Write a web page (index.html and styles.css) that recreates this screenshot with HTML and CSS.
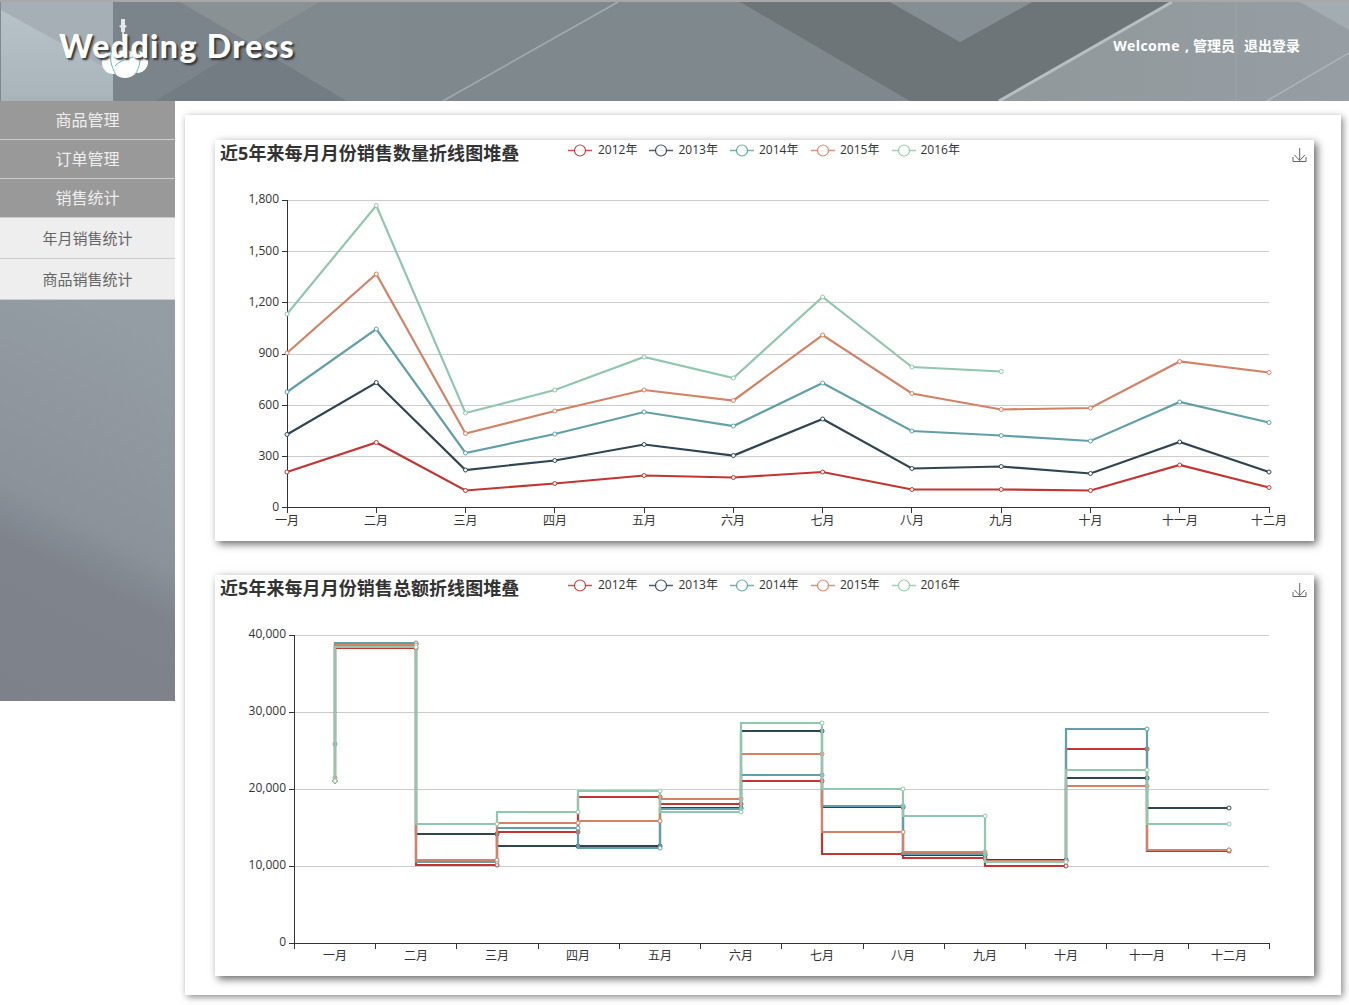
FILE: index.html
```html
<!DOCTYPE html>
<html lang="zh-CN">
<head>
<meta charset="utf-8">
<title>Wedding Dress</title>
<link rel="stylesheet" href="styles.css">
</head>
<body>
<header class="header">
  <svg class="header-bg" viewBox="0 0 1349 101" preserveAspectRatio="none" aria-hidden="true">
    <defs>
      <linearGradient id="panel" x1="0" y1="0" x2="0" y2="1"><stop offset="0" stop-color="#b9c4ca"/><stop offset="1" stop-color="#a9b4ba"/></linearGradient>
      <linearGradient id="right" x1="0" y1="0" x2="1" y2="0"><stop offset="0" stop-color="#90989c"/><stop offset="1" stop-color="#969ea3"/></linearGradient>
    </defs>
    <rect class="hb-base" width="1349" height="101"/>
    <rect x="1" y="2" width="112" height="99" fill="url(#panel)"/>
    <polygon class="hb-panel-top" points="1,2 113,2 113,72 1,10"/>
    <polygon class="hb-c1" points="113,2 180,2 250,43 155,101 113,101"/>
    <polygon class="hb-c2" points="180,2 320,2 250,43"/>
    <polygon class="hb-c3" points="155,101 250,43 347,101"/>
    <polygon class="hb-c4" points="320,2 400,2 400,101 347,101 250,43"/>
    <polygon class="hb-dark" points="740,2 890,2 960,42 1032,2 1172,2 999,101 910,101"/>
    <polygon class="hb-tri" points="890,2 1032,2 960,42"/>
    <polygon fill="url(#right)" points="1172,2 1349,2 1349,101 999,101"/>
    <polygon class="hb-corner" points="1300,2 1349,2 1349,30"/>
    <line class="hb-line" x1="443" y1="101" x2="618" y2="2"/>
    <line class="hb-line-bright" x1="999" y1="101" x2="1172" y2="2"/>
    <line class="hb-line-thin" x1="1267" y1="101" x2="1349" y2="53"/>
    <line class="hb-vert" x1="1236" y1="2" x2="1236" y2="101"/>
    <rect class="hb-top" width="1349" height="2"/>
  </svg>
  <svg class="logo-art" viewBox="0 0 50 64" aria-hidden="true">
    <path class="la-pin" d="M20 1h4v6l2 1-2 2v4h-1l-1 3-1-3h-1v-4l-2-2 2-1z"/>
    <path class="la-stem" d="M22 15v8"/>
    <circle class="la-blob" cx="12" cy="45" r="11"/>
    <circle class="la-blob" cx="36" cy="44" r="11"/>
    <circle class="la-blob" cx="24" cy="46" r="14"/>
    <path class="la-teal" d="M11 32c-3 8-1 16 4 25M37 32c4 8 2 16-3 25M14 48c5-5 11-7 18-9"/>
  </svg>
  <h1 class="logo">Wedding Dress</h1>
  <div class="welcome"><span><span class="welcome-word">Welcome ,</span> 管理员</span><span>退出登录</span></div>
</header>

<div class="layout">
  <nav class="sidebar">
    <div class="menu-main">商品管理</div>
    <div class="menu-main">订单管理</div>
    <div class="menu-main">销售统计</div>
    <div class="menu-sub">年月销售统计</div>
    <div class="menu-sub">商品销售统计</div>
  </nav>

  <main class="content">
    <section class="chart-card">
      <svg class="chart" viewBox="215 140 1099 401">
        <defs>
          <marker id="mr" markerUnits="userSpaceOnUse" markerWidth="8" markerHeight="8" refX="4" refY="4"><circle class="dot s-red" cx="4" cy="4" r="2"/></marker>
          <marker id="md" markerUnits="userSpaceOnUse" markerWidth="8" markerHeight="8" refX="4" refY="4"><circle class="dot s-dark" cx="4" cy="4" r="2"/></marker>
          <marker id="mt" markerUnits="userSpaceOnUse" markerWidth="8" markerHeight="8" refX="4" refY="4"><circle class="dot s-teal" cx="4" cy="4" r="2"/></marker>
          <marker id="mo" markerUnits="userSpaceOnUse" markerWidth="8" markerHeight="8" refX="4" refY="4"><circle class="dot s-orange" cx="4" cy="4" r="2"/></marker>
          <marker id="mg" markerUnits="userSpaceOnUse" markerWidth="8" markerHeight="8" refX="4" refY="4"><circle class="dot s-green" cx="4" cy="4" r="2"/></marker>
        </defs>
        <text class="title" x="220" y="160">近5年来每月月份销售数量折线图堆叠</text>
        <g class="legend">
          <line class="s-red" x1="568" x2="592" y1="150.5" y2="150.5"/><circle class="s-red" cx="580" cy="150.5" r="5.5"/><text x="598" y="154">2012年</text>
          <line class="s-dark" x1="649" x2="673" y1="150.5" y2="150.5"/><circle class="s-dark" cx="661" cy="150.5" r="5.5"/><text x="678.5" y="154">2013年</text>
          <line class="s-teal" x1="730" x2="754" y1="150.5" y2="150.5"/><circle class="s-teal" cx="742" cy="150.5" r="5.5"/><text x="759" y="154">2014年</text>
          <line class="s-orange" x1="811" x2="835" y1="150.5" y2="150.5"/><circle class="s-orange" cx="823" cy="150.5" r="5.5"/><text x="840" y="154">2015年</text>
          <line class="s-green" x1="892" x2="916" y1="150.5" y2="150.5"/><circle class="s-green" cx="904" cy="150.5" r="5.5"/><text x="920.5" y="154">2016年</text>
        </g>
        <path class="tool" d="M1299.7 148v12.5M1294.5 155l5.2 5.5 5.2-5.5M1293 157v4.5h13V157"/>
        <path class="grid" d="M287 200.5H1269M287 251.5H1269M287 302.5H1269M287 354.5H1269M287 405.5H1269M287 456.5H1269"/>
        <path class="axis" d="M287.5 200V508M282 200.5H287M282 251.5H287M282 302.5H287M282 354.5H287M282 405.5H287M282 456.5H287M282 507.5H1269.5M287.5 507V513M376.5 507V513M465.5 507V513M554.5 507V513M644.5 507V513M733.5 507V513M822.5 507V513M911.5 507V513M1001.5 507V513M1090.5 507V513M1179.5 507V513M1269.5 507V513"/>
        <g class="y-labels">
          <text x="279" y="203">1,800</text><text x="279" y="255">1,500</text><text x="279" y="306">1,200</text><text x="279" y="357">900</text><text x="279" y="409">600</text><text x="279" y="460">300</text><text x="279" y="511">0</text>
        </g>
        <g class="x-labels">
          <text x="287" y="525">一月</text><text x="376" y="525">二月</text><text x="465.5" y="525">三月</text><text x="555" y="525">四月</text><text x="644" y="525">五月</text><text x="733" y="525">六月</text><text x="822.5" y="525">七月</text><text x="912" y="525">八月</text><text x="1001" y="525">九月</text><text x="1090.5" y="525">十月</text><text x="1180" y="525">十一月</text><text x="1269" y="525">十二月</text>
        </g>
        <polyline class="series s-red" marker-start="url(#mr)" marker-mid="url(#mr)" marker-end="url(#mr)" points="287,472 376.3,442.5 465.5,490.5 554.8,483.5 644.1,475.5 733.4,477.5 822.6,472 911.9,489.5 1001.2,489.5 1090.5,490.5 1179.7,465 1269,487.5"/>
        <polyline class="series s-dark" marker-start="url(#md)" marker-mid="url(#md)" marker-end="url(#md)" points="287,434.5 376.3,382.5 465.5,470 554.8,460.5 644.1,444.5 733.4,455.5 822.6,419 911.9,468.5 1001.2,466.5 1090.5,473.5 1179.7,442 1269,472"/>
        <polyline class="series s-teal" marker-start="url(#mt)" marker-mid="url(#mt)" marker-end="url(#mt)" points="287,392 376.3,329 465.5,453 554.8,434 644.1,412 733.4,426 822.6,383 911.9,431 1001.2,435.5 1090.5,441 1179.7,402 1269,422.5"/>
        <polyline class="series s-orange" marker-start="url(#mo)" marker-mid="url(#mo)" marker-end="url(#mo)" points="287,353 376.3,274 465.5,433.5 554.8,411 644.1,390 733.4,400.5 822.6,335 911.9,393.5 1001.2,409.5 1090.5,408 1179.7,361.5 1269,372.5"/>
        <polyline class="series s-green" marker-start="url(#mg)" marker-mid="url(#mg)" marker-end="url(#mg)" points="287,314 376.3,205.5 465.5,413 554.8,390 644.1,357 733.4,378 822.6,297 911.9,367 1001.2,371.5"/>
      </svg>
    </section>

    <section class="chart-card">
      <svg class="chart" viewBox="215 575 1099 401">
        <text class="title" x="220" y="595">近5年来每月月份销售总额折线图堆叠</text>
        <g class="legend">
          <line class="s-red" x1="568" x2="592" y1="585.5" y2="585.5"/><circle class="s-red" cx="580" cy="585.5" r="5.5"/><text x="598" y="589">2012年</text>
          <line class="s-dark" x1="649" x2="673" y1="585.5" y2="585.5"/><circle class="s-dark" cx="661" cy="585.5" r="5.5"/><text x="678.5" y="589">2013年</text>
          <line class="s-teal" x1="730" x2="754" y1="585.5" y2="585.5"/><circle class="s-teal" cx="742" cy="585.5" r="5.5"/><text x="759" y="589">2014年</text>
          <line class="s-orange" x1="811" x2="835" y1="585.5" y2="585.5"/><circle class="s-orange" cx="823" cy="585.5" r="5.5"/><text x="840" y="589">2015年</text>
          <line class="s-green" x1="892" x2="916" y1="585.5" y2="585.5"/><circle class="s-green" cx="904" cy="585.5" r="5.5"/><text x="920.5" y="589">2016年</text>
        </g>
        <path class="tool" d="M1299.7 583v12.5M1294.5 590l5.2 5.5 5.2-5.5M1293 592v4.5h13V592"/>
        <path class="grid" d="M294 635.5H1269M294 712.5H1269M294 789.5H1269M294 866.5H1269"/>
        <path class="axis" d="M294.5 635V944M289 635.5H294M289 712.5H294M289 789.5H294M289 866.5H294M289 943.5H1269.5M294.5 943V949M375.5 943V949M456.5 943V949M538.5 943V949M619.5 943V949M700.5 943V949M781.5 943V949M863.5 943V949M944.5 943V949M1025.5 943V949M1106.5 943V949M1188.5 943V949M1269.5 943V949"/>
        <g class="y-labels">
          <text x="286" y="638">40,000</text><text x="286" y="715">30,000</text><text x="286" y="792">20,000</text><text x="286" y="869">10,000</text><text x="286" y="946">0</text>
        </g>
        <g class="x-labels">
          <text x="335" y="960">一月</text><text x="416" y="960">二月</text><text x="497" y="960">三月</text><text x="578" y="960">四月</text><text x="660" y="960">五月</text><text x="741" y="960">六月</text><text x="822" y="960">七月</text><text x="903" y="960">八月</text><text x="985" y="960">九月</text><text x="1066" y="960">十月</text><text x="1147" y="960">十一月</text><text x="1229" y="960">十二月</text>
        </g>
        <path class="series s-red" d="M335 781V648H416V865H497V832H578V797H660V804H741V781H822V854H903V858H985V866H1066V749H1147V851H1229"/>
        <polyline class="points" marker-start="url(#mr)" marker-mid="url(#mr)" marker-end="url(#mr)" points="335,781 416,648 497,865 578,832 660,797 741,804 822,781 903,854 985,858 1066,866 1147,749 1229,851"/>
        <path class="series s-dark" d="M335 781V644H416V834H497V846H578V846H660V808H741V731H822V807H903V855H985V860H1066V778H1147V808H1229"/>
        <polyline class="points" marker-start="url(#md)" marker-mid="url(#md)" marker-end="url(#md)" points="335,781 416,644 497,834 578,846 660,846 741,808 822,731 903,807 985,855 1066,860 1147,778 1229,808"/>
        <path class="series s-teal" d="M335 744V643H416V862H497V828H578V848H660V809H741V775H822V806H903V854H985V861H1066V729H1147V850H1229"/>
        <polyline class="points" marker-start="url(#mt)" marker-mid="url(#mt)" marker-end="url(#mt)" points="335,744 416,643 497,862 578,828 660,848 741,809 822,775 903,806 985,854 1066,861 1147,729 1229,850"/>
        <path class="series s-orange" d="M335 778V645H416V860H497V823H578V821H660V799H741V754H822V832H903V852H985V861H1066V786H1147V850H1229"/>
        <polyline class="points" marker-start="url(#mo)" marker-mid="url(#mo)" marker-end="url(#mo)" points="335,778 416,645 497,860 578,823 660,821 741,799 822,754 903,832 985,852 1066,861 1147,786 1229,850"/>
        <path class="series s-green" d="M335 781V647H416V824H497V812H578V791H660V812H741V723H822V789H903V816H985V862H1066V770H1147V824H1229"/>
        <polyline class="points" marker-start="url(#mg)" marker-mid="url(#mg)" marker-end="url(#mg)" points="335,781 416,647 497,824 578,812 660,791 741,812 822,723 903,789 985,816 1066,862 1147,770 1229,824"/>
      </svg>
    </section>
  </main>
</div>
</body>
</html>
```

FILE: styles.css
```css
html, body {
  margin: 0;
  padding: 0;
  background: #fff;
  font-family: "Open Sans", "Noto Sans CJK SC", sans-serif;
}

/* header */
.header {
  position: relative;
  height: 101px;
  display: flex;
  align-items: center;
  justify-content: space-between;
  padding: 0 49px 0 59px;
}
.header-bg {
  position: absolute;
  inset: 0;
  width: 100%;
  height: 100%;
}
.hb-base { fill: #7f888c; }
.hb-panel-top { fill: #a5afb5; }
.hb-c1 { fill: #7b848a; }
.hb-c2 { fill: #899195; }
.hb-c3 { fill: #737c82; }
.hb-c4 { fill: #80898e; }
.hb-dark { fill: #6d7579; }
.hb-tri { fill: #858e92; }
.hb-corner { fill: #a3acb1; }
.hb-line { stroke: #a3abaf; stroke-width: 1.5; }
.hb-line-bright { stroke: #b7bfc3; stroke-width: 3; }
.hb-line-thin { stroke: #adb5b9; stroke-width: 1.5; }
.hb-vert { stroke: #9ba3a7; stroke-width: 1; }
.hb-top { fill: #a8a8a8; }

.logo-art {
  position: absolute;
  left: 101px;
  top: 18px;
  width: 50px;
  height: 64px;
}
.la-pin { fill: #e4e8e8; }
.la-stem { stroke: #e4e8e8; stroke-width: 1.5; fill: none; }
.la-blob { fill: #fff; }
.la-teal { fill: none; stroke: #5fc0bd; stroke-width: 1; }

.logo {
  position: relative;
  margin: 0 0 10px;
  font-family: "Lato", sans-serif;
  font-size: 32px;
  line-height: 40px;
  font-weight: 900;
  letter-spacing: 1.4px;
  color: #fff;
  text-shadow: 2px 2px 2px #333;
}
.welcome {
  position: relative;
  display: flex;
  gap: 9px;
  margin-bottom: 12px;
  font-size: 14px;
  font-weight: 700;
  color: #fff;
}
.welcome-word {
  letter-spacing: .4px;
  word-spacing: 1px;
}

/* page */
.layout {
  display: flex;
  align-items: flex-start;
  height: 904px;
}
.sidebar {
  flex: 0 0 175px;
  height: 600px;
  background: linear-gradient(207deg, #959da4 35%, #8b929a 68%, #7e838c 76%, #7c818a 100%);
}
.menu-main {
  height: 38px;
  line-height: 38px;
  border-bottom: 1px solid #ccc;
  background: #999;
  color: #eee;
  font-size: 16px;
  text-align: center;
}
.menu-sub {
  height: 40px;
  line-height: 40px;
  border-bottom: 1px solid #ccc;
  background: #eee;
  color: #666;
  font-size: 15px;
  text-align: center;
}
.content {
  display: flex;
  flex-direction: column;
  gap: 34px;
  box-sizing: border-box;
  width: 1156px;
  height: 880px;
  margin: 14px 0 0 10px;
  padding: 25px 27px 0 30px;
  background: #fff;
  box-shadow: 2px 2px 7px #888;
}
.chart-card {
  width: 1099px;
  height: 401px;
  background: #fff;
  box-shadow: 3px 3px 8px #666;
}

/* chart */
.chart {
  display: block;
  width: 1099px;
  height: 401px;
  font-family: "Open Sans", "Noto Sans CJK SC", sans-serif;
}
.title {
  font-size: 18px;
  font-weight: 700;
  fill: #333;
  letter-spacing: .06px;
}
.legend text, .y-labels text, .x-labels text {
  font-size: 12px;
  fill: #333;
}
.legend line { stroke-width: 1.5; opacity: .85; }
.legend circle { fill: #fff; stroke-width: 1.2; opacity: .9; }
.y-labels text { text-anchor: end; }
.x-labels text { text-anchor: middle; }
.tool { fill: none; stroke: #666; stroke-width: 1; }
.grid { fill: none; stroke: #ccc; stroke-width: 1; }
.axis { fill: none; stroke: #333; stroke-width: 1; }
.series { fill: none; stroke-width: 2.2; }
.points { fill: none; stroke: none; }
.dot { fill: #fff; stroke-width: 1; }
.s-red { stroke: #c23531; }
.s-dark { stroke: #2f4554; }
.s-teal { stroke: #61a0a8; }
.s-orange { stroke: #d48265; }
.s-green { stroke: #91c7ae; }
```
